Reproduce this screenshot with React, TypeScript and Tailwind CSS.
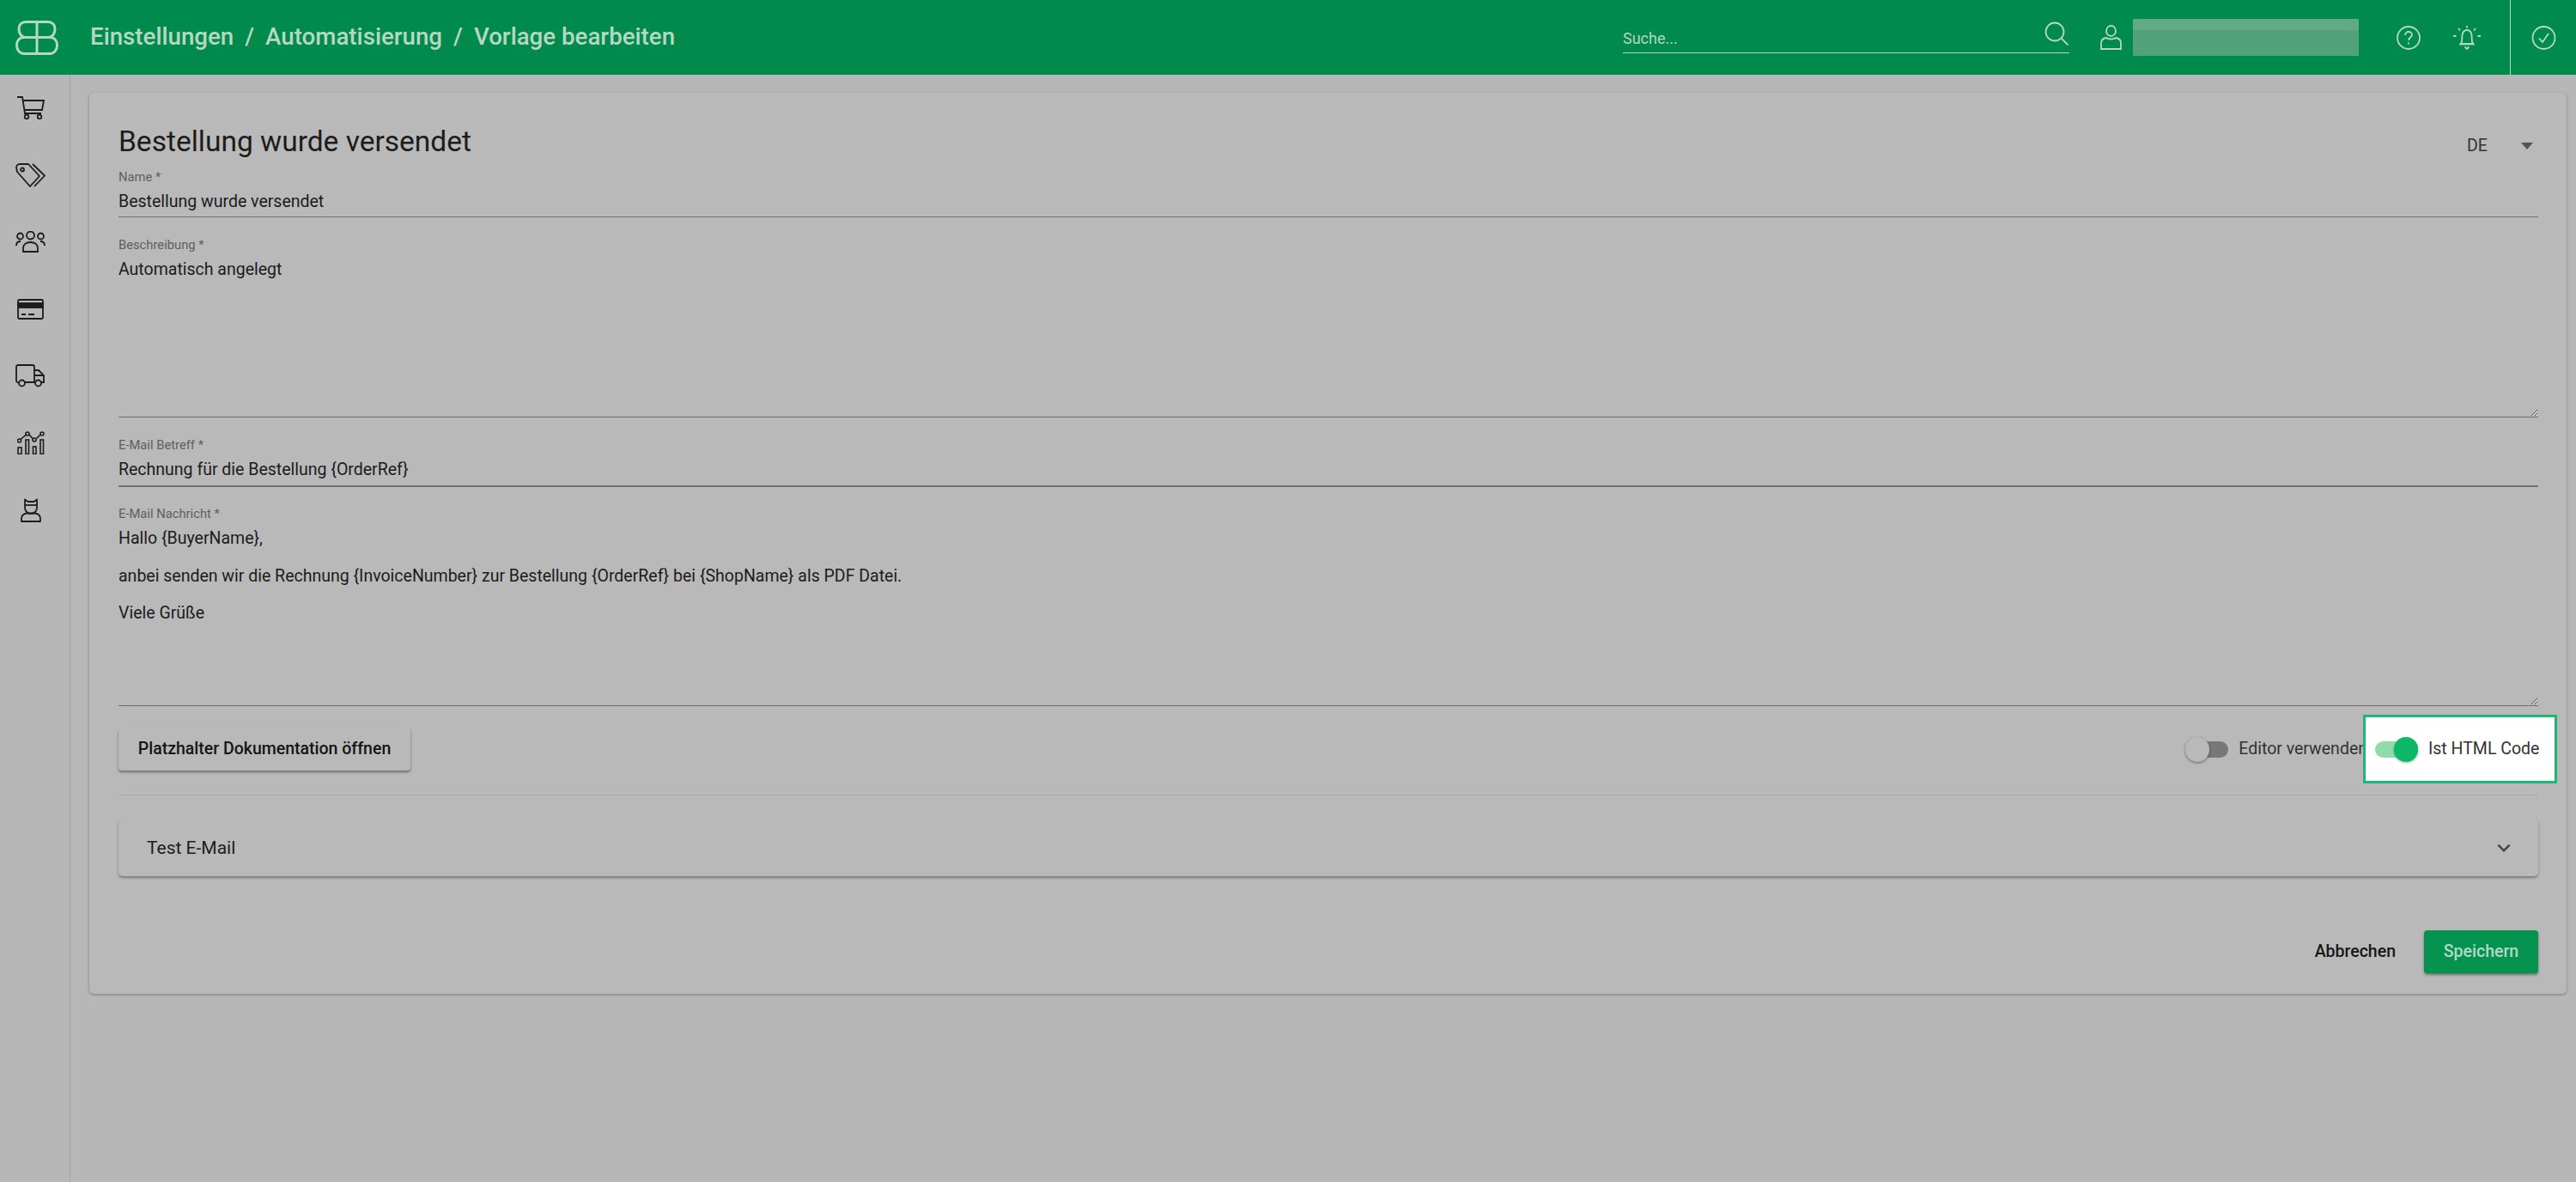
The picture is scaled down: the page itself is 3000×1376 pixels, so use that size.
import React from 'react';

const font = "font-['Roboto',sans-serif]";

const Logo = () => (
  <svg width="50" height="40" viewBox="0 0 50 40" fill="none" stroke="#b5d8c5" strokeWidth="3">
    <path d="M25 1.5V38.5" />
    <path d="M12 1.5H38C43 1.5 46 5 46 10C46 15 43 19.5 38 19.5H12C7 19.5 4 15 4 10C4 5 7 1.5 12 1.5Z" />
    <path d="M10 19.5H40C46 19.5 48.5 24 48.5 29C48.5 34 45 38.5 40 38.5H10C5 38.5 1.5 34 1.5 29C1.5 24 4 19.5 10 19.5Z" />
  </svg>
);

const CartIcon = () => (
  <svg width="32" height="27" viewBox="0 0 32 27" fill="none" stroke="#1c1c1c" strokeWidth="1.800">
    <path d="M0 1H6L9 20H28" />
    <path d="M7 5H31L29 16H8.500" />
    <circle cx="11" cy="24" r="2.300" />
    <circle cx="26" cy="24" r="2.300" />
  </svg>
);

const TagsIcon = () => (
  <svg width="35" height="28" viewBox="0 0 35 28" fill="none" stroke="#1c1c1c" strokeWidth="1.800" strokeLinejoin="round">
    <path d="M1 5C1 3 2.500 1 5 1H15L28 15L17 27L2 10Z" />
    <circle cx="8" cy="7.500" r="2" />
    <path d="M20 1L34 14.500L22 27" />
  </svg>
);

const PeopleIcon = () => (
  <svg width="35" height="25" viewBox="0 0 35 25" fill="none" stroke="#1c1c1c" strokeWidth="1.800">
    <circle cx="5.500" cy="6" r="3.500" />
    <circle cx="17.500" cy="5" r="4.500" />
    <circle cx="29.500" cy="6" r="3.500" />
    <path d="M9 24V20C9 16 12 13 17.500 13C23 13 26 16 26 20V24Z" />
    <path d="M1 17C1 14 3 12 6 12" />
    <path d="M34 17C34 14 32 12 29 12" />
  </svg>
);

const CardIcon = () => (
  <svg width="31" height="24" viewBox="0 0 31 24" fill="none" stroke="#1c1c1c" strokeWidth="1.800">
    <rect x="1" y="1" width="29" height="22" rx="1.500" />
    <rect x="1" y="5" width="29" height="5" fill="#1c1c1c" />
    <path d="M5 18H10M13 18H20" />
  </svg>
);

const TruckIcon = () => (
  <svg width="35" height="27" viewBox="0 0 35 27" fill="none" stroke="#1c1c1c" strokeWidth="1.800">
    <path d="M3.500 21H2.500C1.500 21 1 20 1 19V3C1 2 2 1 3 1H20C21 1 22 2 22 3V21H11" />
    <path d="M22 7H27L33 13V21H30" />
    <path d="M22 13H33M22 21H24" />
    <circle cx="7.500" cy="22" r="3.500" />
    <circle cx="26.500" cy="22" r="3.500" />
  </svg>
);

const ChartIcon = () => (
  <svg width="32" height="27" viewBox="0 0 32 27" fill="none" stroke="#1c1c1c" strokeWidth="1.600">
    <rect x="1" y="19" width="4" height="7.500" />
    <rect x="10" y="10" width="3.500" height="16.500" />
    <rect x="18.500" y="18" width="3.500" height="8.500" />
    <rect x="27" y="10" width="3.500" height="16.500" />
    <path d="M4 9.500L10.500 4M14 4L18 8.500M22.500 8.500L27 4" />
    <circle cx="2.500" cy="11" r="2" />
    <circle cx="12" cy="3" r="2" />
    <circle cx="20" cy="10" r="2" />
    <circle cx="29" cy="3" r="2" />
  </svg>
);

const WorkerIcon = () => (
  <svg width="24" height="28" viewBox="0 0 24 28" fill="none" stroke="#1c1c1c" strokeWidth="1.800" strokeLinejoin="round">
    <path d="M5 1.500V11C5 15 8 18 12 18C16 18 19 15 19 11V1.500L15.500 4H8.500Z" />
    <path d="M5 8H19" />
    <path d="M1 27V24C1 20 4 18 7 17.500H17C20 18 23 20 23 24V27Z" />
  </svg>
);

const SearchIcon = () => (
  <svg width="29" height="28" viewBox="0 0 29 28" fill="none" stroke="#b5d8c5" strokeWidth="1.800">
    <circle cx="12" cy="12" r="10.500" />
    <path d="M20 20L27.500 27.500" />
  </svg>
);

const UserIcon = () => (
  <svg width="25" height="29" viewBox="0 0 25 29" fill="none" stroke="#b5d8c5" strokeWidth="1.800">
    <ellipse cx="12.500" cy="7" rx="5.500" ry="6" />
    <path d="M1 28V21C1 17 4 15.500 7 15C9 17 16 17 18 15C21 15.500 24 17 24 21V28Z" />
  </svg>
);

const HelpIcon = () => (
  <svg width="28" height="28" viewBox="0 0 28 28" fill="none" stroke="#b5d8c5" strokeWidth="1.800">
    <circle cx="14" cy="14" r="13" />
    <path d="M10 11C10 8.500 12 7 14 7C16 7 18 8.500 18 10.500C18 13 14.500 13.500 14 17" />
    <path d="M14 19.500V21.500" />
  </svg>
);

const BellIcon = () => (
  <svg width="34" height="28" viewBox="0 0 34 28" fill="none" stroke="#b5d8c5" strokeWidth="1.800">
    <path d="M10 21H24C22 18 23 15 22.500 11C22 7.500 20 5 17 5C14 5 12 7.500 11.500 11C11 15 12 18 10 21Z" />
    <path d="M8 21.500H26" />
    <path d="M14.500 24.500L17 27L19.500 24.500" />
    <path d="M17 0V2.500M7 3L9 5.500M27 3L25 5.500M1 12H4.500M29.500 12H33" />
  </svg>
);

const CheckIcon = () => (
  <svg width="29" height="28" viewBox="0 0 29 28" fill="none" stroke="#b5d8c5" strokeWidth="1.800">
    <circle cx="14.500" cy="14" r="13" />
    <path d="M9 14.500L13 19L20 9" />
  </svg>
);

const Field = ({ label, value, className, thick }: { label: string; value: string; className: string; thick?: boolean }) => (
  <div className={className}>
    <div className="h-[20px] text-[14.75px] leading-[20px] text-[#5f5f5f]">{label}</div>
    <div className={`pt-[5px] text-[19.5px] leading-[28px] text-[#1c1c1c] ${thick ? 'h-[39px] border-b-2 border-[#6f6f6f]' : 'h-[37px] border-b border-[#6f6f6f]'}`}>
      {value}
    </div>
  </div>
);

const Area = ({ label, value, className, pad }: { label: string; value: string; className: string; pad: string }) => (
  <div className={`flex flex-col ${className}`}>
    <div className="h-[20px] shrink-0 text-[14.75px] leading-[20px] text-[#5f5f5f]">{label}</div>
    <textarea
      readOnly
      defaultValue={value}
      className={`w-full flex-1 resize-y border-b border-[#6f6f6f] bg-transparent text-[19.5px] leading-[21.75px] text-[#1c1c1c] outline-none ${pad}`}
    />
  </div>
);

const Toggle = ({ on }: { on?: boolean }) =>
  on ? (
    <div className="relative h-[19px] w-[50px] rounded-full bg-[#8fdcaa]">
      <div className="absolute right-0 top-[-5px] h-[29px] w-[28px] rounded-full bg-[#0cb866] shadow-[0_1px_3px_rgba(0,0,0,0.3)]" />
    </div>
  ) : (
    <div className="relative h-[19px] w-[50px] rounded-full bg-[#787878]">
      <div className="absolute left-0 top-[-5px] h-[29px] w-[28px] rounded-full bg-[#b9b9b9] shadow-[0_1px_3px_rgba(0,0,0,0.45)]" />
    </div>
  );

const sideIcons = [CartIcon, TagsIcon, PeopleIcon, CardIcon, TruckIcon, ChartIcon, WorkerIcon];

export default function App() {
  return (
    <div className={`flex h-[1376px] w-full flex-col overflow-hidden bg-[#b7b7b7] ${font}`}>
      <header className="flex h-[87px] shrink-0 items-center bg-[#008a4b]">
        <div className="flex w-[105px] shrink-0 justify-start pl-[18px]">
          <Logo />
        </div>
        <div className="flex items-center gap-[13px] pb-[2px] text-[27.7px] font-medium text-[#b5d8c5]">
          <span>Einstellungen</span>
          <span>/</span>
          <span>Automatisierung</span>
          <span>/</span>
          <span>Vorlage bearbeiten</span>
        </div>
        <div className="ml-auto flex h-full items-center">
          <div className="flex h-[37px] w-[520px] items-center justify-between self-center border-b border-[#b5d8c5] pb-[2px] pt-[4px] text-[18px] text-[#b5d8c5]">
            <span>Suche...</span>
            <div className="mt-[-10px]">
              <SearchIcon />
            </div>
          </div>
          <div className="ml-[36px]">
            <UserIcon />
          </div>
          <div className="ml-[13px] h-[43px] w-[263px] bg-[linear-gradient(#60aa88_30%,#51a17b_30%)]" />
          <div className="ml-[44px]">
            <HelpIcon />
          </div>
          <div className="ml-[37px]">
            <BellIcon />
          </div>
          <div className="ml-[33px] flex h-full w-[77px] items-center justify-center border-l border-[#b5d8c5]">
            <CheckIcon />
          </div>
        </div>
      </header>

      <div className="flex min-h-0 flex-1">
        <aside className="flex w-[82px] shrink-0 flex-col border-r border-[#a4a4a4]">
          {sideIcons.map((Icon, i) => (
            <div key={i} className="flex h-[78px] items-center justify-center pb-[1px] pr-[10px]">
              <Icon />
            </div>
          ))}
        </aside>

        <main className="flex-1 pl-[22px] pr-[11px] pt-[21px]">
          <div className="rounded-[5px] bg-[#b9b9b9] pb-[24px] pl-[34px] pr-[33px] pt-[34px] shadow-[0_1px_3px_rgba(0,0,0,0.35)]">
            <div className="flex h-[46px] items-center justify-between">
              <h1 className="pt-[1px] text-[33.5px] font-normal text-[#1c1c1c]">Bestellung wurde versendet</h1>
              <div className="mt-[10px] flex w-[83px] items-center justify-between text-[19.5px] text-[#333333]">
                <span>DE</span>
                <span className="mr-[6px] h-0 w-0 border-x-[7px] border-t-[8px] border-x-transparent border-t-[#555555]" />
              </div>
            </div>

            <Field label="Name *" value="Bestellung wurde versendet" className="mt-[8px]" />
            <Area label="Beschreibung *" value="Automatisch angelegt" className="mt-[22px] h-[211px]" pad="pt-[8px]" />
            <Field label="E-Mail Betreff *" value="Rechnung für die Bestellung {OrderRef}" className="mt-[22px]" thick />
            <Area
              label="E-Mail Nachricht *"
              value={'Hallo {BuyerName},\n\nanbei senden wir die Rechnung {InvoiceNumber} zur Bestellung {OrderRef} bei {ShopName} als PDF Datei.\n\nViele Grüße'}
              className="mt-[21px] h-[234px]"
              pad="pt-[8px]"
            />

            <div className="mt-[10px] flex h-[80px] items-center">
              <button className="h-[50px] w-[340px] rounded-[4px] bg-[#b9b9b9] text-[19.5px] font-medium text-[#151515] shadow-[0_2px_3px_rgba(0,0,0,0.4)]">
                Platzhalter Dokumentation öffnen
              </button>
              <div className="ml-auto mr-[-5px] flex items-center">
                <Toggle />
                <span className="ml-[12px] whitespace-nowrap text-[19.5px] text-[#333333]">Editor verwenden</span>
              </div>
              <div className="relative mr-[-22px] flex h-[80px] w-[226px] shrink-0 items-center border-[3px] border-[#1fb574] bg-white pl-[11px]">
                <Toggle on />
                <span className="ml-[12px] whitespace-nowrap text-[19.5px] text-[#333333]">Ist HTML Code</span>
              </div>
            </div>

            <div className="mt-[13px] h-px bg-[#a8a8a8]" />

            <div className="mt-[27px] flex h-[67px] items-center justify-between rounded-[5px] bg-[#b9b9b9] pl-[33px] pr-[25px] shadow-[0_2px_3px_rgba(0,0,0,0.35)]">
              <span className="pt-[2px] text-[21px] text-[#1c1c1c]">Test E-Mail</span>
              <svg width="30" height="30" viewBox="0 0 24 24" fill="#444444">
                <path d="M16.590 8.590 12 13.170 7.410 8.590 6 10l6 6 6-6z" />
              </svg>
            </div>

            <div className="mt-[63px] flex h-[50px] items-center justify-end">
              <button className="text-[19.5px] font-medium text-[#151515]">Abbrechen</button>
              <button className="ml-[33px] h-[50px] w-[133px] rounded-[4px] bg-[#03934f] text-[19.5px] font-medium text-[#b5d8c5] shadow-[0_2px_3px_rgba(0,0,0,0.4)]">
                Speichern
              </button>
            </div>
          </div>
        </main>
      </div>
    </div>
  );
}
